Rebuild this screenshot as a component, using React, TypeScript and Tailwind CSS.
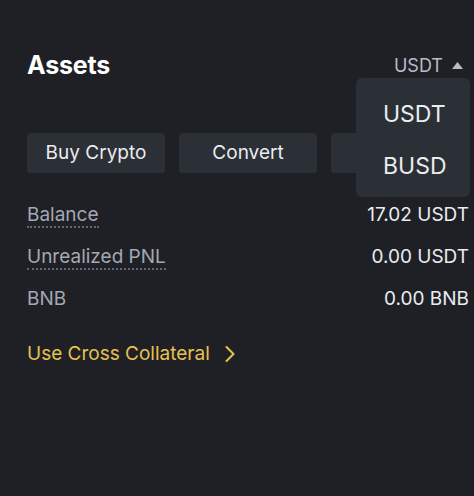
import { ChevronRight } from "lucide-react";

export default function App() {
	const rows = [
		{ label: "Balance", value: "17.02 USDT", dotted: true },
		{ label: "Unrealized PNL", value: "0.00 USDT", dotted: true },
		{ label: "BNB", value: "0.00 BNB", dotted: false },
	];

	return (
		<div
			className="relative h-[496px] w-[474px] overflow-hidden bg-[#1e2026] pl-[27px] pr-[5px] pt-[50px]"
			style={{ fontFamily: "Inter, 'Noto Sans', sans-serif" }}>
			{/* Header */}
			<div className="flex h-[30px] items-center justify-between">
				<h1 className="text-[25px] font-bold leading-none tracking-[-0.2px] text-white">
					Assets
				</h1>
				<div className="mr-[6px] flex items-center gap-[9px] text-[18px] text-[#b7bdc6]">
					<span>USDT</span>
					<svg width="11" height="7" viewBox="0 0 11 7">
						<path d="M5.5 0 L11 7 L0 7 Z" fill="#b7bdc6" />
					</svg>
				</div>
			</div>

			{/* Buttons */}
			<div className="mt-[53px] grid grid-cols-3 gap-[14px]">
				<button className="h-[40px] rounded-[4px] bg-[#2b2f36] text-[19px] text-[#eaecef]">
					Buy Crypto
				</button>
				<button className="h-[40px] rounded-[4px] bg-[#2b2f36] text-[19px] text-[#eaecef]">
					Convert
				</button>
				{/* third button sits under the open dropdown */}
				<button className="h-[40px] rounded-[4px] bg-[#2b2f36]" />
			</div>

			{/* Rows */}
			<div className="mt-[30px] flex flex-col gap-[17px]">
				{rows.map((r) => (
					<div
						key={r.label}
						className="flex h-[25px] items-start justify-between text-[19px] leading-[23px]">
						<span
							className={
								r.dotted
									? "border-b-2 border-dotted border-[#5e6673] text-[#a3a9b3]"
									: "text-[#a3a9b3]"
							}>
							{r.label}
						</span>
						<span className="text-[#eaecef]">{r.value}</span>
					</div>
				))}
			</div>

			{/* Cross collateral */}
			<div className="mt-[28px] flex items-center gap-[6px] text-[19px] text-[#e8c14f]">
				<span>Use Cross Collateral</span>
				<ChevronRight size={28} strokeWidth={1.8} />
			</div>

			{/* Dropdown */}
			<div className="absolute left-[356px] top-[78px] flex h-[119px] w-[114px] flex-col rounded-[6px] bg-[#2b2f36] pl-[27px] pt-[21px] text-[23px] text-[#eaecef]">
				<div className="h-[52px] leading-[30px]">USDT</div>
				<div className="leading-[30px]">BUSD</div>
			</div>
		</div>
	);
}
